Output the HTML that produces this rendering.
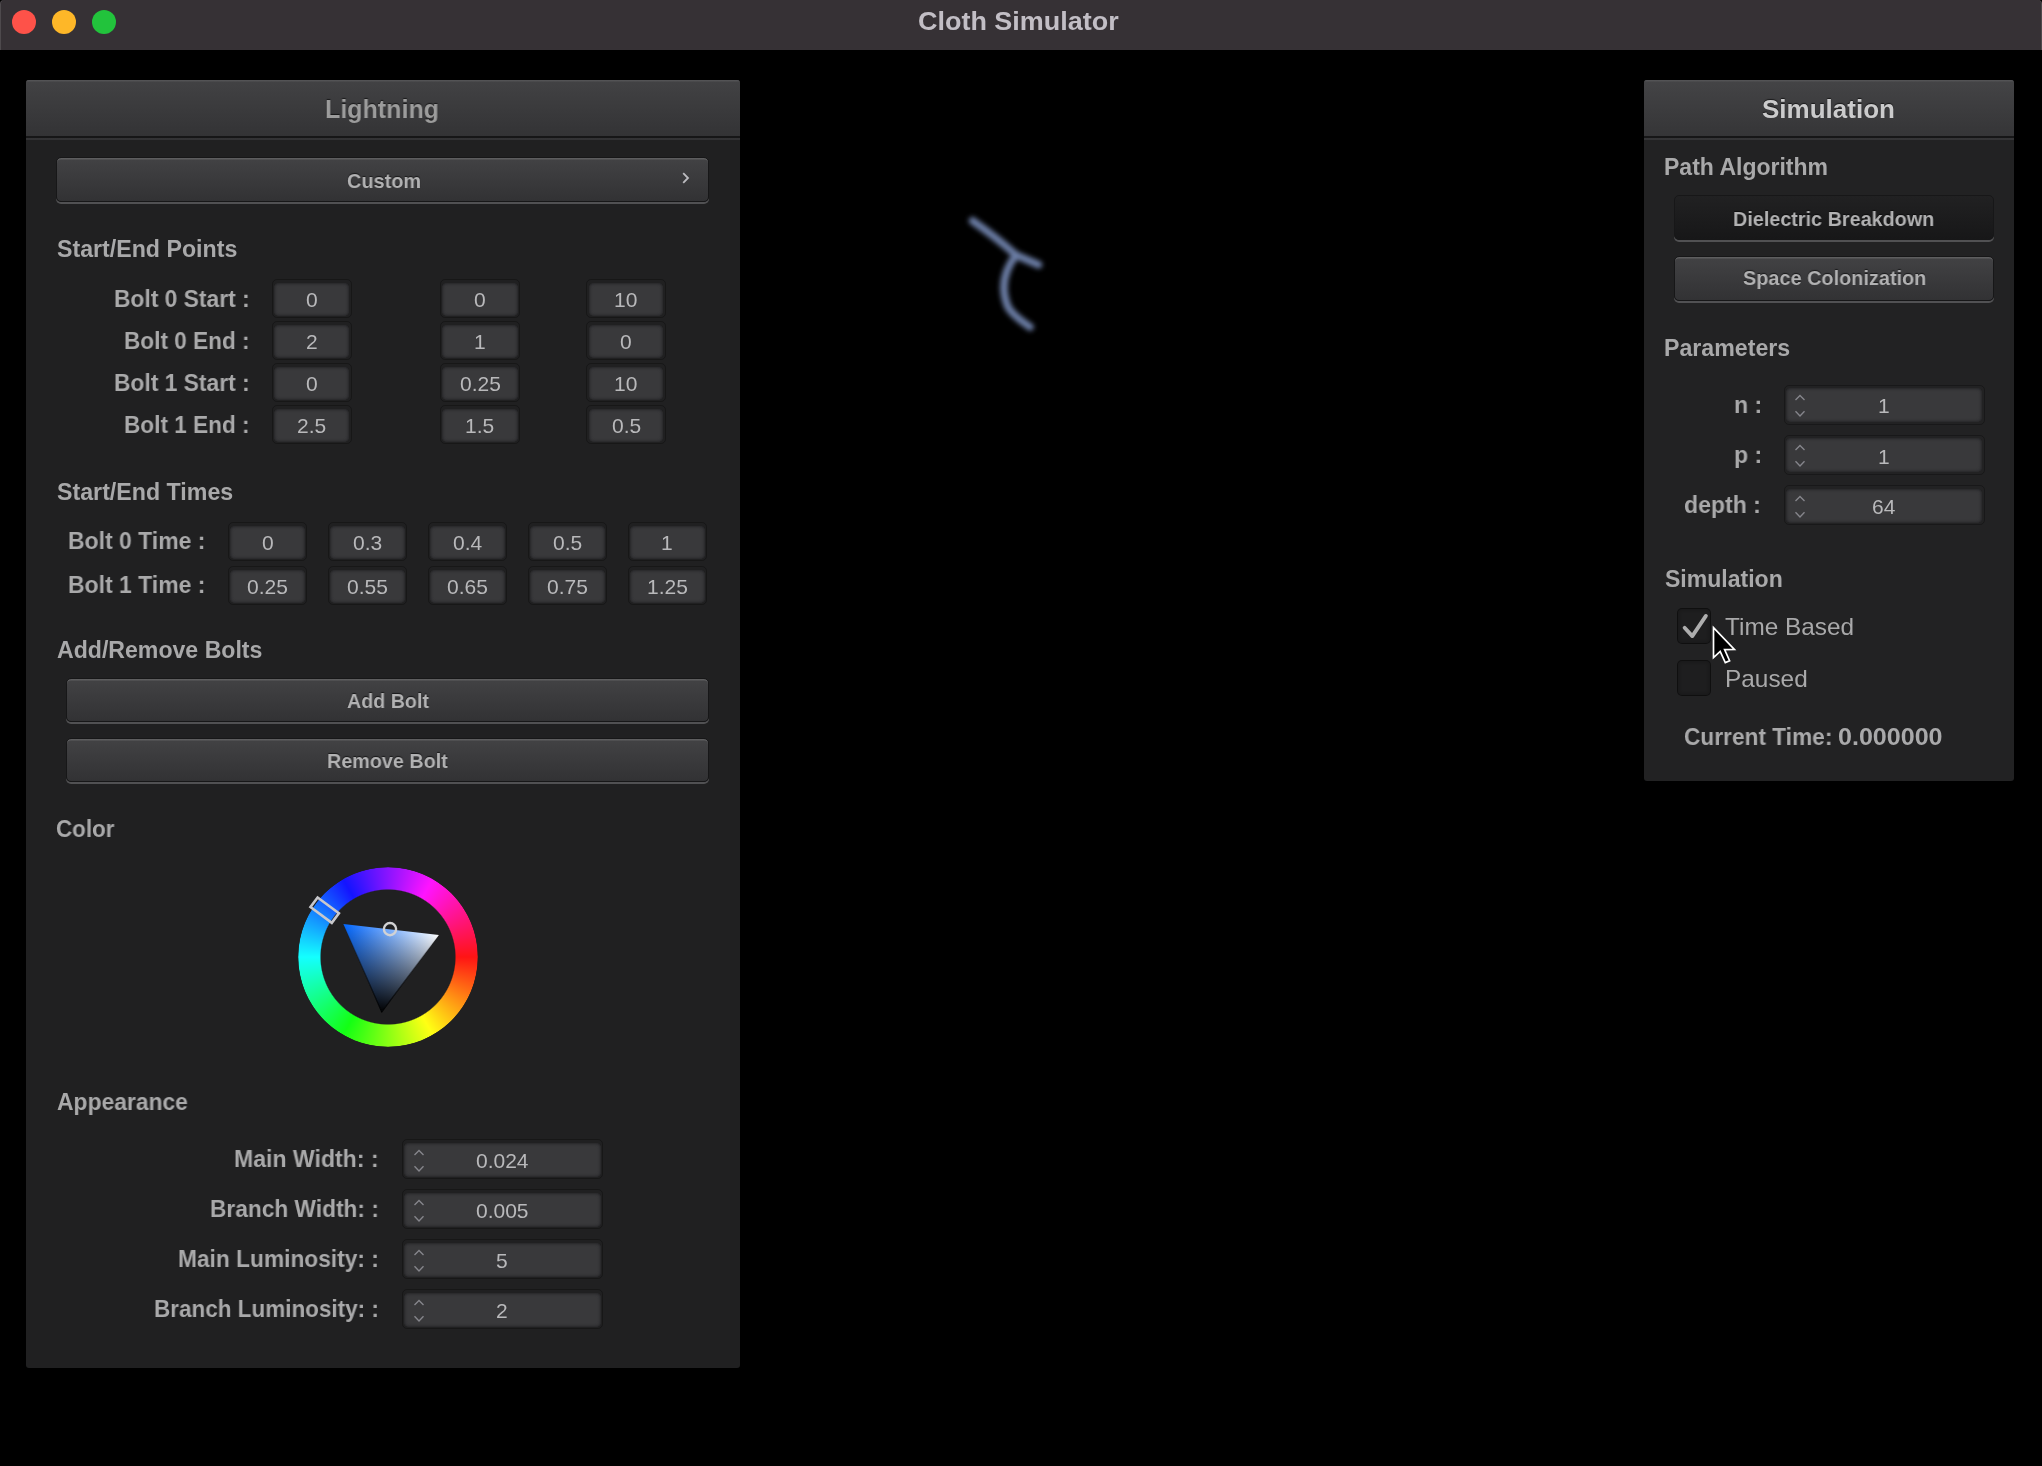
<!DOCTYPE html>
<html lang="en"><head><meta charset="utf-8"><title>Cloth Simulator</title>
<style>
html,body{margin:0;padding:0;background:#000;}
body{width:2042px;height:1466px;position:relative;overflow:hidden;font-family:"Liberation Sans",sans-serif;font-weight:700;}
.abs{position:absolute;}
.grp{position:absolute;left:0;top:0;width:0;height:0;}
.t{position:absolute;white-space:nowrap;line-height:1;transform-origin:0 0;will-change:transform;}
.t.ttl,.t.bt{text-shadow:0 -1px 1px rgba(0,0,0,.6);}
.titlebar{position:absolute;left:0;top:0;width:2042px;height:50px;background:#363135;border-radius:4px 4px 0 0;box-shadow:inset 1px 0 0 rgba(255,255,255,.12),inset -1px 0 0 rgba(255,255,255,.12);}
.tl{position:absolute;width:24px;height:24px;border-radius:50%;}
.win{position:absolute;border-radius:3px;overflow:hidden;}
.hdr{position:absolute;left:0;top:0;right:0;height:60px;background:linear-gradient(#424244,#323234);box-shadow:inset 0 1.5px 0 #535355;}
.hdr:after{content:"";position:absolute;left:0;right:0;top:56.3px;height:1.9px;background:#161617;}
.hdr.f{background:linear-gradient(#444446,#343436);}
.btn{position:absolute;box-sizing:border-box;border:1.6px solid #171718;border-radius:5px;background:linear-gradient(#424244,#323234);box-shadow:0 2px 0 #515153,inset 0 1.5px 0 rgba(255,255,255,.15);}
.btn.pushed{background:linear-gradient(#212122,#171718);box-shadow:0 2px 0 #515153;}
.tb{position:absolute;box-sizing:border-box;border-radius:5px;background:#39393b;box-shadow:inset 0 0 2.5px 1px rgba(33,33,35,.8);}
.tb:after{content:"";position:absolute;left:-2.4px;right:-2.4px;top:-3.6px;bottom:-2.4px;border:1.1px solid rgba(0,0,0,.28);border-radius:5px;}
.cb{position:absolute;box-sizing:border-box;border-radius:5px;background:rgba(0,0,0,.10);border:1.3px solid rgba(0,0,0,.5);box-shadow:inset 0 0 4px 1px rgba(0,0,0,.22);}
</style></head><body>
<svg width="0" height="0" style="position:absolute"><defs><filter id="bl" x="-20%" y="-20%" width="140%" height="140%"><feGaussianBlur stdDeviation="2.4"/></filter></defs></svg>
<header class="grp">
<div class="titlebar"></div>
<div class="tl" style="left:12px;top:10px;background:#fe5249"></div>
<div class="tl" style="left:52px;top:10px;background:#feb728"></div>
<div class="tl" style="left:92px;top:10px;background:#22c33c"></div>
<span class="t " style="left:918.22px;top:8.19px;font-size:26px;color:#c2bec5;transform:scaleX(1.0367);">Cloth Simulator</span>
</header>
<section class="grp" aria-label="Lightning">
<div class="win" style="left:26.2px;top:80px;width:713.8px;height:1287.5px;background:#202021"><div class="hdr"></div></div>
<span class="t ttl" style="left:325.47px;top:96.19px;font-size:26px;color:#9c9c9c;transform:scaleX(0.9627);">Lightning</span>
<div class="btn" style="left:56px;top:157px;width:653px;height:44.5px"></div>
<span class="t bt" style="left:346.50px;top:170.02px;font-size:21px;color:#b2b2b3;transform:scaleX(0.9471);">Custom</span>
<svg class="abs" style="left:680px;top:171px" width="12" height="14" viewBox="0 0 12 14"><path d="M3.2 2.2 L8 7 L3.2 11.8" fill="none" stroke="#bcbcc0" stroke-width="1.8"/></svg>
<span class="t " style="left:56.76px;top:238.23px;font-size:23px;color:#a9a9aa;transform:scaleX(1.0077);">Start/End Points</span>
<span class="t " style="left:113.92px;top:287.08px;font-size:24px;color:#a9a9aa;transform:scaleX(0.9507);">Bolt 0 Start :</span>
<div class="tb" style="left:274.00px;top:283.00px;width:75.30px;height:33.00px;"></div>
<span class="t " style="left:305.82px;top:289.22px;font-size:21px;color:#b9b9bb;transform:scaleX(1.0000);font-weight:400;">0</span>
<div class="tb" style="left:442.20px;top:283.00px;width:75.40px;height:33.00px;"></div>
<span class="t " style="left:474.07px;top:289.22px;font-size:21px;color:#b9b9bb;transform:scaleX(1.0000);font-weight:400;">0</span>
<div class="tb" style="left:588.80px;top:283.00px;width:74.70px;height:33.00px;"></div>
<span class="t " style="left:614.10px;top:289.22px;font-size:21px;color:#b9b9bb;transform:scaleX(1.0000);font-weight:400;">10</span>
<span class="t " style="left:123.93px;top:329.08px;font-size:24px;color:#a9a9aa;transform:scaleX(0.9422);">Bolt 0 End :</span>
<div class="tb" style="left:274.00px;top:325.00px;width:75.30px;height:33.00px;"></div>
<span class="t " style="left:305.79px;top:331.22px;font-size:21px;color:#b9b9bb;transform:scaleX(1.0000);font-weight:400;">2</span>
<div class="tb" style="left:442.20px;top:325.00px;width:75.40px;height:33.00px;"></div>
<span class="t " style="left:473.78px;top:331.22px;font-size:21px;color:#b9b9bb;transform:scaleX(1.0000);font-weight:400;">1</span>
<div class="tb" style="left:588.80px;top:325.00px;width:74.70px;height:33.00px;"></div>
<span class="t " style="left:620.32px;top:331.22px;font-size:21px;color:#b9b9bb;transform:scaleX(1.0000);font-weight:400;">0</span>
<span class="t " style="left:113.92px;top:371.08px;font-size:24px;color:#a9a9aa;transform:scaleX(0.9507);">Bolt 1 Start :</span>
<div class="tb" style="left:274.00px;top:367.00px;width:75.30px;height:33.00px;"></div>
<span class="t " style="left:305.82px;top:373.22px;font-size:21px;color:#b9b9bb;transform:scaleX(1.0000);font-weight:400;">0</span>
<div class="tb" style="left:442.20px;top:367.00px;width:75.40px;height:33.00px;"></div>
<span class="t " style="left:459.50px;top:373.22px;font-size:21px;color:#b9b9bb;transform:scaleX(1.0000);font-weight:400;">0.25</span>
<div class="tb" style="left:588.80px;top:367.00px;width:74.70px;height:33.00px;"></div>
<span class="t " style="left:614.10px;top:373.22px;font-size:21px;color:#b9b9bb;transform:scaleX(1.0000);font-weight:400;">10</span>
<span class="t " style="left:123.93px;top:413.08px;font-size:24px;color:#a9a9aa;transform:scaleX(0.9422);">Bolt 1 End :</span>
<div class="tb" style="left:274.00px;top:409.00px;width:75.30px;height:33.00px;"></div>
<span class="t " style="left:296.95px;top:415.22px;font-size:21px;color:#b9b9bb;transform:scaleX(1.0000);font-weight:400;">2.5</span>
<div class="tb" style="left:442.20px;top:409.00px;width:75.40px;height:33.00px;"></div>
<span class="t " style="left:464.93px;top:415.22px;font-size:21px;color:#b9b9bb;transform:scaleX(1.0000);font-weight:400;">1.5</span>
<div class="tb" style="left:588.80px;top:409.00px;width:74.70px;height:33.00px;"></div>
<span class="t " style="left:611.58px;top:415.22px;font-size:21px;color:#b9b9bb;transform:scaleX(1.0000);font-weight:400;">0.5</span>
<span class="t " style="left:56.76px;top:480.53px;font-size:23px;color:#a9a9aa;transform:scaleX(1.0090);">Start/End Times</span>
<span class="t " style="left:68.01px;top:528.88px;font-size:24px;color:#a9a9aa;transform:scaleX(0.9575);">Bolt 0 Time :</span>
<div class="tb" style="left:230.00px;top:526.00px;width:75.00px;height:33.00px;"></div>
<span class="t " style="left:261.67px;top:532.22px;font-size:21px;color:#b9b9bb;transform:scaleX(1.0000);font-weight:400;">0</span>
<div class="tb" style="left:330.00px;top:526.00px;width:75.00px;height:33.00px;"></div>
<span class="t " style="left:352.95px;top:532.22px;font-size:21px;color:#b9b9bb;transform:scaleX(1.0000);font-weight:400;">0.3</span>
<div class="tb" style="left:430.00px;top:526.00px;width:75.00px;height:33.00px;"></div>
<span class="t " style="left:452.80px;top:532.22px;font-size:21px;color:#b9b9bb;transform:scaleX(1.0000);font-weight:400;">0.4</span>
<div class="tb" style="left:530.00px;top:526.00px;width:75.00px;height:33.00px;"></div>
<span class="t " style="left:552.93px;top:532.22px;font-size:21px;color:#b9b9bb;transform:scaleX(1.0000);font-weight:400;">0.5</span>
<div class="tb" style="left:630.00px;top:526.00px;width:75.00px;height:33.00px;"></div>
<span class="t " style="left:661.38px;top:532.22px;font-size:21px;color:#b9b9bb;transform:scaleX(1.0000);font-weight:400;">1</span>
<span class="t " style="left:68.01px;top:572.98px;font-size:24px;color:#a9a9aa;transform:scaleX(0.9575);">Bolt 1 Time :</span>
<div class="tb" style="left:230.00px;top:570.00px;width:75.00px;height:33.00px;"></div>
<span class="t " style="left:247.10px;top:576.22px;font-size:21px;color:#b9b9bb;transform:scaleX(1.0000);font-weight:400;">0.25</span>
<div class="tb" style="left:330.00px;top:570.00px;width:75.00px;height:33.00px;"></div>
<span class="t " style="left:347.10px;top:576.22px;font-size:21px;color:#b9b9bb;transform:scaleX(1.0000);font-weight:400;">0.55</span>
<div class="tb" style="left:430.00px;top:570.00px;width:75.00px;height:33.00px;"></div>
<span class="t " style="left:447.10px;top:576.22px;font-size:21px;color:#b9b9bb;transform:scaleX(1.0000);font-weight:400;">0.65</span>
<div class="tb" style="left:530.00px;top:570.00px;width:75.00px;height:33.00px;"></div>
<span class="t " style="left:547.10px;top:576.22px;font-size:21px;color:#b9b9bb;transform:scaleX(1.0000);font-weight:400;">0.75</span>
<div class="tb" style="left:630.00px;top:570.00px;width:75.00px;height:33.00px;"></div>
<span class="t " style="left:646.71px;top:576.22px;font-size:21px;color:#b9b9bb;transform:scaleX(1.0000);font-weight:400;">1.25</span>
<span class="t " style="left:56.62px;top:638.63px;font-size:23px;color:#a9a9aa;transform:scaleX(1.0045);">Add/Remove Bolts</span>
<div class="btn" style="left:66px;top:677.5px;width:643px;height:44.5px"></div>
<span class="t bt" style="left:347.21px;top:689.92px;font-size:21px;color:#b2b2b3;transform:scaleX(0.9362);">Add Bolt</span>
<div class="btn" style="left:66px;top:737.7px;width:643px;height:44.3px"></div>
<span class="t bt" style="left:327.22px;top:750.02px;font-size:21px;color:#b2b2b3;transform:scaleX(0.9410);">Remove Bolt</span>
<span class="t " style="left:56.30px;top:818.43px;font-size:23px;color:#a9a9aa;transform:scaleX(0.9739);">Color</span>
<div class="abs" style="left:298px;top:866.5px;width:180px;height:180px;border-radius:50%;background:conic-gradient(from 90deg,#ff1414,#ffff14,#14ff14,#14ffff,#1414ff,#ff14ff,#ff1414);-webkit-mask:radial-gradient(circle closest-side,transparent 66.9px,#000 68.1px,#000 89.2px,transparent 90.4px);mask:radial-gradient(circle closest-side,transparent 66.9px,#000 68.1px,#000 89.2px,transparent 90.4px)"></div><svg class="abs" style="left:288px;top:856.5px" width="200" height="200" viewBox="288 856.5 200 200"><defs><linearGradient id="g1" gradientUnits="userSpaceOnUse" x1="343.4" y1="923.5" x2="438.9" y2="934.4"><stop offset="0" stop-color="#0066ff"/><stop offset="1" stop-color="#fff"/></linearGradient><linearGradient id="g2" gradientUnits="userSpaceOnUse" x1="391.1" y1="928.9" x2="381.7" y2="1011.6"><stop offset="0" stop-color="#000" stop-opacity="0"/><stop offset="1" stop-color="#000" stop-opacity="1"/></linearGradient></defs><polygon points="343.4,923.5 438.9,934.4 381.7,1011.6" fill="url(#g1)"/><polygon points="343.4,923.5 438.9,934.4 381.7,1011.6" fill="url(#g2)" stroke="url(#g2)" stroke-width="1.2" stroke-linejoin="round"/><g transform="translate(388 956.5) rotate(216.5)"><rect x="65.5" y="-6" width="26.5" height="12" fill="none" stroke="#c8c8cc" stroke-width="2.6"/></g><circle cx="390" cy="928.6" r="6.1" fill="none" stroke="#d2d2d4" stroke-width="2.4"/></svg>
<span class="t " style="left:56.63px;top:1090.63px;font-size:23px;color:#a9a9aa;transform:scaleX(0.9947);">Appearance</span>
<span class="t " style="left:234.20px;top:1146.88px;font-size:24px;color:#a9a9aa;transform:scaleX(0.9612);">Main Width: :</span>
<div class="tb" style="left:404.00px;top:1142.50px;width:196.50px;height:34.00px;"></div>
<svg class="abs" style="left:411.5px;top:1146.5px" width="14" height="26" viewBox="0 0 14 26"><path d="M2.5 8 L7 3.5 L11.5 8 M2.5 19.2 L7 23.9 L11.5 19.2" fill="none" stroke="#86868c" stroke-width="1.35"/></svg>
<span class="t " style="left:475.81px;top:1149.62px;font-size:21px;color:#b9b9bb;transform:scaleX(1.0000);font-weight:400;">0.024</span>
<span class="t " style="left:209.92px;top:1196.98px;font-size:24px;color:#a9a9aa;transform:scaleX(0.9462);">Branch Width: :</span>
<div class="tb" style="left:404.00px;top:1192.50px;width:196.50px;height:34.00px;"></div>
<svg class="abs" style="left:411.5px;top:1196.5px" width="14" height="26" viewBox="0 0 14 26"><path d="M2.5 8 L7 3.5 L11.5 8 M2.5 19.2 L7 23.9 L11.5 19.2" fill="none" stroke="#86868c" stroke-width="1.35"/></svg>
<span class="t " style="left:475.95px;top:1199.62px;font-size:21px;color:#b9b9bb;transform:scaleX(1.0000);font-weight:400;">0.005</span>
<span class="t " style="left:177.92px;top:1246.88px;font-size:24px;color:#a9a9aa;transform:scaleX(0.9474);">Main Luminosity: :</span>
<div class="tb" style="left:404.00px;top:1242.50px;width:196.50px;height:34.00px;"></div>
<svg class="abs" style="left:411.5px;top:1246.5px" width="14" height="26" viewBox="0 0 14 26"><path d="M2.5 8 L7 3.5 L11.5 8 M2.5 19.2 L7 23.9 L11.5 19.2" fill="none" stroke="#86868c" stroke-width="1.35"/></svg>
<span class="t " style="left:496.37px;top:1249.62px;font-size:21px;color:#b9b9bb;transform:scaleX(1.0000);font-weight:400;">5</span>
<span class="t " style="left:153.84px;top:1296.98px;font-size:24px;color:#a9a9aa;transform:scaleX(0.9371);">Branch Luminosity: :</span>
<div class="tb" style="left:404.00px;top:1292.50px;width:196.50px;height:34.00px;"></div>
<svg class="abs" style="left:411.5px;top:1296.5px" width="14" height="26" viewBox="0 0 14 26"><path d="M2.5 8 L7 3.5 L11.5 8 M2.5 19.2 L7 23.9 L11.5 19.2" fill="none" stroke="#86868c" stroke-width="1.35"/></svg>
<span class="t " style="left:496.34px;top:1299.62px;font-size:21px;color:#b9b9bb;transform:scaleX(1.0000);font-weight:400;">2</span>
</section>
<section class="grp" aria-label="Simulation">
<div class="win" style="left:1644px;top:80px;width:370px;height:701.3px;background:#222223"><div class="hdr f"></div></div>
<span class="t ttl" style="left:1762.28px;top:95.89px;font-size:26px;color:#cbcbcc;transform:scaleX(1.0001);">Simulation</span>
<span class="t " style="left:1664.31px;top:156.33px;font-size:23px;color:#a9a9aa;transform:scaleX(0.9984);">Path Algorithm</span>
<div class="btn pushed" style="left:1674px;top:194.5px;width:320px;height:45px"></div>
<span class="t bt" style="left:1732.91px;top:207.62px;font-size:21px;color:#b2b2b3;transform:scaleX(0.9424);">Dielectric Breakdown</span>
<div class="btn" style="left:1674px;top:255.5px;width:320px;height:45px"></div>
<span class="t bt" style="left:1742.65px;top:267.22px;font-size:21px;color:#b2b2b3;transform:scaleX(0.9467);">Space Colonization</span>
<span class="t " style="left:1664.09px;top:336.63px;font-size:23px;color:#a9a9aa;transform:scaleX(1.0067);">Parameters</span>
<span class="t " style="left:1733.50px;top:393.18px;font-size:24px;color:#a9a9aa;transform:scaleX(0.9628);">n :</span>
<div class="tb" style="left:1786.20px;top:388.20px;width:196.20px;height:34.00px;"></div>
<svg class="abs" style="left:1793.3px;top:392.2px" width="14" height="26" viewBox="0 0 14 26"><path d="M2.5 8 L7 3.5 L11.5 8 M2.5 19.2 L7 23.9 L11.5 19.2" fill="none" stroke="#86868c" stroke-width="1.35"/></svg>
<span class="t " style="left:1877.88px;top:395.32px;font-size:21px;color:#b9b9bb;transform:scaleX(1.0000);font-weight:400;">1</span>
<span class="t " style="left:1733.50px;top:443.38px;font-size:24px;color:#a9a9aa;transform:scaleX(0.9628);">p :</span>
<div class="tb" style="left:1786.20px;top:438.40px;width:196.20px;height:34.00px;"></div>
<svg class="abs" style="left:1793.3px;top:442.4px" width="14" height="26" viewBox="0 0 14 26"><path d="M2.5 8 L7 3.5 L11.5 8 M2.5 19.2 L7 23.9 L11.5 19.2" fill="none" stroke="#86868c" stroke-width="1.35"/></svg>
<span class="t " style="left:1877.88px;top:445.52px;font-size:21px;color:#b9b9bb;transform:scaleX(1.0000);font-weight:400;">1</span>
<span class="t " style="left:1684.18px;top:492.78px;font-size:24px;color:#a9a9aa;transform:scaleX(0.9604);">depth :</span>
<div class="tb" style="left:1786.20px;top:488.60px;width:196.20px;height:34.00px;"></div>
<svg class="abs" style="left:1793.3px;top:492.6px" width="14" height="26" viewBox="0 0 14 26"><path d="M2.5 8 L7 3.5 L11.5 8 M2.5 19.2 L7 23.9 L11.5 19.2" fill="none" stroke="#86868c" stroke-width="1.35"/></svg>
<span class="t " style="left:1872.11px;top:495.72px;font-size:21px;color:#b9b9bb;transform:scaleX(1.0000);font-weight:400;">64</span>
<span class="t " style="left:1664.77px;top:568.13px;font-size:23px;color:#a9a9aa;transform:scaleX(1.0016);">Simulation</span>
<div class="cb" style="left:1677.00px;top:608.00px;width:34.00px;height:36.00px;"></div>
<div class="cb" style="left:1677.00px;top:659.50px;width:34.00px;height:36.00px;"></div>
<svg class="abs" style="left:1677px;top:608px" width="40" height="36" viewBox="0 0 40 36"><path d="M7.6 19.8 L15.3 28.1 L28.9 7.9" fill="none" stroke="#aeaeae" stroke-width="3.8" stroke-linecap="round" stroke-linejoin="round"/></svg>
<span class="t " style="left:1725.25px;top:615.08px;font-size:24px;color:#a9a9aa;transform:scaleX(1.0151);font-weight:400;">Time Based</span>
<span class="t " style="left:1725.05px;top:667.28px;font-size:24px;color:#a9a9aa;transform:scaleX(1.0161);font-weight:400;">Paused</span>
<span class="t " style="left:1684.19px;top:725.28px;font-size:24px;color:#a9a9aa;transform:scaleX(0.9456);">Current Time:</span>
<span class="t " style="left:1838.26px;top:725.28px;font-size:24px;color:#a9a9aa;transform:scaleX(1.0446);">0.000000</span>
</section>
<main class="grp">
<svg class="abs" style="left:940px;top:190px" width="130" height="170" viewBox="940 190 130 170">
<g fill="none" stroke="#6c7ea6" stroke-width="7.6" stroke-linecap="round" stroke-linejoin="round" filter="url(#bl)">
<path d="M972.6 220.8 Q996 237 1016 255 L1038.5 264.8"/>
<path d="M1016 255 C1003 272 1001 290 1008 307 C1013 316 1022 321 1030 327"/>
</g></svg>
<svg class="abs" style="left:1708px;top:622px" width="34" height="46" viewBox="0 0 34 46">
<path d="M5.5 5.6 L5.5 35.6 L12.2 29.4 L17.3 40.6 L21.6 38.7 L16.6 27.6 L26.4 27.4 Z" fill="#000" stroke="#fff" stroke-width="1.7" stroke-linejoin="miter"/></svg>
</main>
</body></html>
